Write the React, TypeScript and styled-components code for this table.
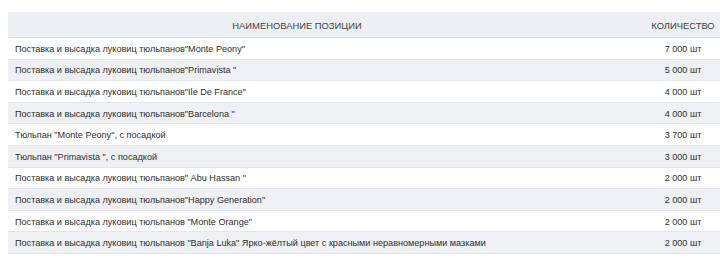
import styled, { createGlobalStyle } from "styled-components";

const GlobalStyle = createGlobalStyle`
  body {
    margin: 0;
    background: #fff;
    font-family: "Liberation Sans", Arial, sans-serif;
    overflow: hidden;
  }
`;

const items = [
  { name: 'Поставка и высадка луковиц тюльпанов"Monte Peony"', qty: "7 000 шт" },
  { name: 'Поставка и высадка луковиц тюльпанов"Primavista "', qty: "5 000 шт" },
  { name: 'Поставка и высадка луковиц тюльпанов"Ile De France"', qty: "4 000 шт" },
  { name: 'Поставка и высадка луковиц тюльпанов"Barcelona "', qty: "4 000 шт" },
  { name: 'Тюльпан "Monte Peony", с посадкой', qty: "3 700 шт" },
  { name: 'Тюльпан "Primavista ", с посадкой', qty: "3 000 шт" },
  { name: 'Поставка и высадка луковиц тюльпанов" Abu Hassan "', qty: "2 000 шт" },
  { name: 'Поставка и высадка луковиц тюльпанов"Happy Generation"', qty: "2 000 шт" },
  { name: 'Поставка и высадка луковиц тюльпанов "Monte Orange"', qty: "2 000 шт" },
  {
    name: 'Поставка и высадка луковиц тюльпанов "Banja Luka" Ярко-жёлтый цвет с красными неравномерными мазками',
    qty: "2 000 шт",
  },
];

const App = () => (
  <Page>
    <GlobalStyle />
    <Table>
      <HeadRow>
        <HeadCell>Наименование позиции</HeadCell>
        <HeadCell>Количество</HeadCell>
      </HeadRow>
      {items.map((it, i) => (
        <Row key={i} $striped={i % 2 === 1}>
          <NameCell>{it.name}</NameCell>
          <QtyCell>{it.qty}</QtyCell>
        </Row>
      ))}
    </Table>
  </Page>
);

export default App;

const Page = styled.div`
  padding: 12px 0 0 8px;
  width: 800px;
`;

const Table = styled.div`
  width: 772px;
  display: flex;
  flex-direction: column;
`;

const HeadRow = styled.div`
  display: grid;
  grid-template-columns: 578px 194px;
  height: 26px;
  box-sizing: border-box;
  background: #eceff3;
  border-bottom: 1px solid #d3d7dd;
`;

const HeadCell = styled.div`
  display: flex;
  align-items: center;
  justify-content: center;
  padding-top: 1px;
  font-size: 9.4px;
  text-transform: uppercase;
  color: #444;
`;

const Row = styled.div<{ $striped: boolean }>`
  display: grid;
  grid-template-columns: 578px 194px;
  height: 21.6px;
  box-sizing: border-box;
  background: ${(p) => (p.$striped ? "#eef0f4" : "#fff")};
  border-bottom: 1px solid #e2e5ea;
  font-size: 9.1px;
  color: #2e2e2e;
`;

const NameCell = styled.div`
  display: flex;
  align-items: center;
  padding: 1px 0 0 7px;
  white-space: pre;
`;

const QtyCell = styled.div`
  display: flex;
  align-items: center;
  justify-content: center;
  padding-top: 1px;
  white-space: pre;
`;
